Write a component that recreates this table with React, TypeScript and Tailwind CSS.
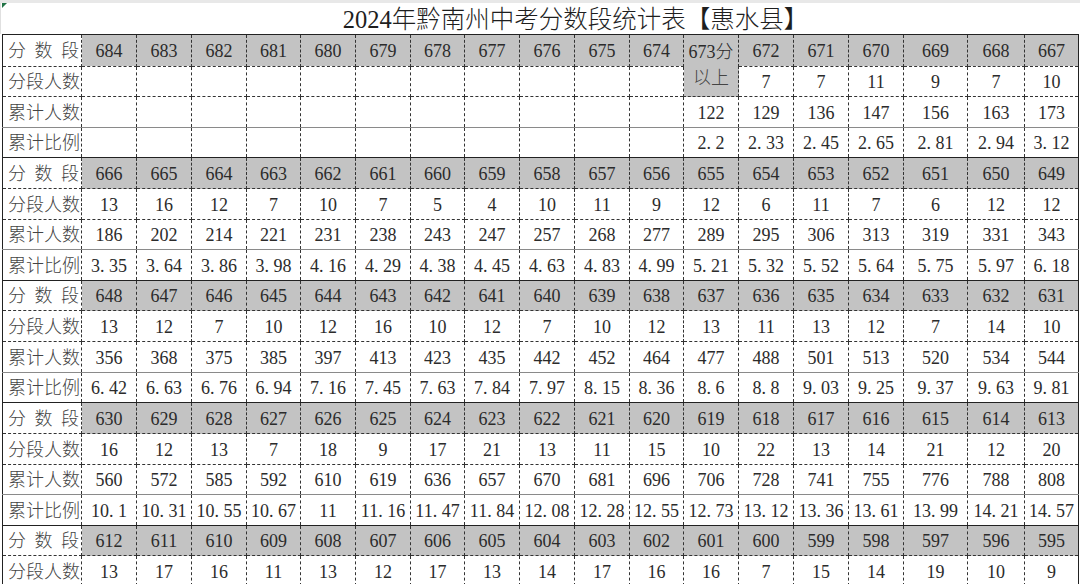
import React from "react";

type Val = string | number | null;
type Kind = "score" | "seg" | "cum" | "pct";

interface Block {
  scores: Val[];
  seg: Val[];
  cum: Val[];
  pct: Val[];
}

const colWidths = [79, 55, 55, 55, 54, 55, 55, 54, 55, 55, 55, 54, 55, 55, 55, 55, 64, 57, 54];

const range = (from: number) => Array.from({ length: 18 }, (_, i) => from - i);
const empty11: Val[] = Array(11).fill(null);

const blocks: Block[] = [
  {
    scores: range(684),
    seg: [...empty11, null, 7, 7, 11, 9, 7, 10],
    cum: [...empty11, 122, 129, 136, 147, 156, 163, 173],
    pct: [...empty11, "2.2", "2.33", "2.45", "2.65", "2.81", "2.94", "3.12"],
  },
  {
    scores: range(666),
    seg: [13, 16, 12, 7, 10, 7, 5, 4, 10, 11, 9, 12, 6, 11, 7, 6, 12, 12],
    cum: [186, 202, 214, 221, 231, 238, 243, 247, 257, 268, 277, 289, 295, 306, 313, 319, 331, 343],
    pct: ["3.35", "3.64", "3.86", "3.98", "4.16", "4.29", "4.38", "4.45", "4.63", "4.83", "4.99", "5.21", "5.32", "5.52", "5.64", "5.75", "5.97", "6.18"],
  },
  {
    scores: range(648),
    seg: [13, 12, 7, 10, 12, 16, 10, 12, 7, 10, 12, 13, 11, 13, 12, 7, 14, 10],
    cum: [356, 368, 375, 385, 397, 413, 423, 435, 442, 452, 464, 477, 488, 501, 513, 520, 534, 544],
    pct: ["6.42", "6.63", "6.76", "6.94", "7.16", "7.45", "7.63", "7.84", "7.97", "8.15", "8.36", "8.6", "8.8", "9.03", "9.25", "9.37", "9.63", "9.81"],
  },
  {
    scores: range(630),
    seg: [16, 12, 13, 7, 18, 9, 17, 21, 13, 11, 15, 10, 22, 13, 14, 21, 12, 20],
    cum: [560, 572, 585, 592, 610, 619, 636, 657, 670, 681, 696, 706, 728, 741, 755, 776, 788, 808],
    pct: ["10.1", "10.31", "10.55", "10.67", "11", "11.16", "11.47", "11.84", "12.08", "12.28", "12.55", "12.73", "13.12", "13.36", "13.61", "13.99", "14.21", "14.57"],
  },
  {
    scores: range(612),
    seg: [13, 17, 16, 11, 13, 12, 17, 13, 14, 17, 16, 16, 7, 15, 14, 19, 10, 9],
    cum: [],
    pct: [],
  },
];

// 行高 30.6 左右，按行号凑整
const rowTall = (idx: number) => Math.round(30.61 * (idx + 1)) - Math.round(30.61 * idx) > 30;

// 宋体风格：小数点占半个字宽
function Num({ v }: { v: Val }) {
  if (v === null) return null;
  const s = String(v);
  const dot = s.indexOf(".");
  if (dot < 0) return <>{s}</>;
  return (
    <>
      {s.slice(0, dot)}
      <span className="inline-block w-[9px] text-left">.</span>
      {s.slice(dot + 1)}
    </>
  );
}

const cellBase = "p-0 border border-dashed border-[#333] text-center align-middle whitespace-nowrap";

function Label({ kind }: { kind: Kind }) {
  if (kind === "score") {
    return (
      <div className="relative top-[1px] flex justify-between pl-[5px] pr-[2px] text-[#444]">
        <span>分</span>
        <span>数</span>
        <span>段</span>
      </div>
    );
  }
  const text = kind === "seg" ? "分段人数" : kind === "cum" ? "累计人数" : "累计比例";
  return <div className="relative top-[1px] pl-[5px] text-left text-[#444]">{text}</div>;
}

function Row({ kind, vals, idx, first }: { kind: Kind; vals: Val[]; idx: number; first?: boolean }) {
  const bottom =
    kind === "cum" ? "[border-bottom-style:solid] border-b-[#8a8a8a]" : kind === "pct" ? "[border-bottom-style:solid] border-b-[#222]" : "";
  const bg = kind === "score" ? "bg-[#c3c3c3]" : "bg-white";
  return (
    <tr className={rowTall(idx) ? "h-[31px]" : "h-[30px]"}>
      <td className={`${cellBase} ${bottom} bg-white`}>
        <Label kind={kind} />
      </td>
      {vals.map((v, i) => {
        if (first && i === 11) {
          if (kind === "score") {
            return (
              <td key={i} rowSpan={2} className={`${cellBase} bg-[#c3c3c3] leading-[29px] whitespace-normal align-top pt-[3px]`}>
                673分
                <br />
                <span className="relative -top-[3px] text-[#444]">以上</span>
              </td>
            );
          }
          if (kind === "seg") return null;
        }
        return (
          <td key={i} className={`${cellBase} ${bottom} ${bg}`}>
            <span className="relative top-[1px]">
              <Num v={v} />
            </span>
          </td>
        );
      })}
    </tr>
  );
}

export default function App() {
  return (
    <div
      className="relative w-[1080px] h-[584px] overflow-hidden bg-white text-[#2b2b2b]"
      style={{ fontFamily: '"Liberation Serif", "Noto Sans CJK SC", serif' }}
    >
      <div className="h-[3px] bg-[#e8e8e8]" />
      {/* 左上角单元格标记 */}
      <svg className="absolute left-[2px] top-[3px]" width="5" height="5" viewBox="0 0 5 5">
        <polygon points="0,0 5,0 0,5" fill="#217346" />
      </svg>
      <div className="flex h-[31px] border-l border-[#e0e0e0]">
        <div className="flex-1 flex items-center justify-center pl-[70px] pt-[3px] text-[24.5px] leading-none font-light text-[#1e1e1e]">
          2024年黔南州中考分数段统计表【惠水县】
        </div>
      </div>
      <div className="pl-[2px]">
        <table className="table-fixed border border-[#222] text-[18px] font-light">
          <colgroup>
            {colWidths.map((w, i) => (
              <col key={i} style={{ width: w }} />
            ))}
          </colgroup>
          <tbody>
            {blocks.map((b, bi) => (
              <React.Fragment key={bi}>
                <Row kind="score" vals={b.scores} idx={bi * 4} first={bi === 0} />
                <Row kind="seg" vals={b.seg} idx={bi * 4 + 1} first={bi === 0} />
                {b.cum.length > 0 && <Row kind="cum" vals={b.cum} idx={bi * 4 + 2} />}
                {b.pct.length > 0 && <Row kind="pct" vals={b.pct} idx={bi * 4 + 3} />}
              </React.Fragment>
            ))}
          </tbody>
        </table>
      </div>
    </div>
  );
}
